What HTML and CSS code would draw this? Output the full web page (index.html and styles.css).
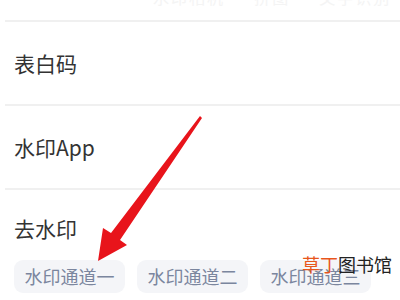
FILE: index.html
```html
<!DOCTYPE html>
<html>
    <head>
        <title>去水印</title>
        <link rel="stylesheet" href="styles.css">
    </head>
    <body>
        <div class="top-cut">
            <span class="top-text">水印相机 · 拼图 · 文字识别 · 证件照</span>
        </div>
        <div class="row">
            <p class="row-title">表白码</p>
        </div>
        <div class="row">
            <p class="row-title">水印App</p>
        </div>
        <div class="row last">
            <p class="row-title">去水印</p>
            <div class="chips">
                <span class="chip">水印通道一</span>
                <span class="chip">水印通道二</span>
                <span class="chip">水印通道三</span>
            </div>
        </div>

        <svg class="arrow" width="400" height="300" viewBox="0 0 400 300">
            <polygon fill="#e8141b" points="98,261 103,228 111,233 200,116 202,118 120,240 127,245"/>
        </svg>

        <div class="watermark"><span class="wm-orange">草丁</span>图书馆</div>
    </body>
</html>
```

FILE: styles.css
```css
body{
    margin: 0;
    width: 400px;
    height: 300px;
    overflow: hidden;
    background-color: white;
    font-family: "Noto Sans CJK SC", "Noto Sans", sans-serif;
    color: #333;
    position: relative;
}

.top-cut{
    height: 20px;
    overflow: hidden;
    border-bottom: 2px solid #f0f0f0;
    margin-left: 5px;
}

.top-text{
    display: block;
    white-space: nowrap;
    margin-top: -14px;
    margin-left: 148px;
    font-size: 16px;
    line-height: 22px;
    color: #f4f4f4;
    letter-spacing: 2px;
}

.row{
    height: 82px;
    border-bottom: 2px solid #f0f0f0;
    margin-left: 5px;
    padding-left: 9px;
    display: flex;
    align-items: center;
}

.row.last{
    border-bottom: none;
    display: block;
    padding-top: 23px;
}

.row-title{
    margin: 0;
    font-size: 21px;
    line-height: 30px;
}

.chips{
    display: flex;
    gap: 12px;
    margin-top: 17px;
}

.chip{
    width: 111px;
    height: 33px;
    line-height: 33px;
    text-align: center;
    background-color: #f4f5f8;
    border-radius: 9px;
    color: #7b869e;
    font-size: 18px;
}

.arrow{
    position: absolute;
    left: 0;
    top: 0;
}

.watermark{
    position: absolute;
    left: 302px;
    top: 252px;
    font-size: 18px;
    line-height: 24px;
    color: #222;
}

.wm-orange{
    color: #e8561c;
}
```
